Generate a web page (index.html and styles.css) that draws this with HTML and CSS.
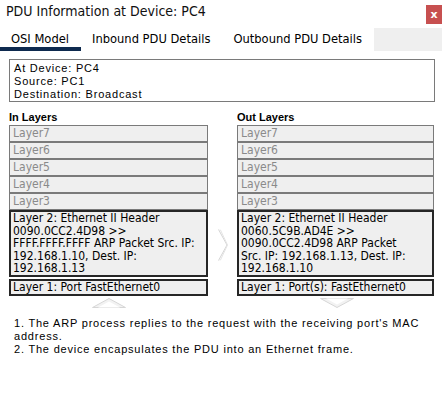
FILE: index.html
```html
<!DOCTYPE html>
<html>
<head>
<meta charset="utf-8">
<link rel="stylesheet" href="styles.css">
</head>
<body>
<div class="window">
  <header class="titlebar">
    <span class="title">PDU Information at Device: PC4</span>
    <span class="close">x</span>
  </header>
  <nav class="tabs">
    <span class="tab active">OSI Model</span>
    <span class="tab">Inbound PDU Details</span>
    <span class="tab">Outbound PDU Details</span>
    <span class="tab-fill"></span>
  </nav>
  <section class="info">
    <div>At Device: PC4</div>
    <div>Source: PC1</div>
    <div>Destination: Broadcast</div>
  </section>
  <div class="layers">
    <div class="col col-in">
      <h3 class="col-title">In Layers</h3>
      <div class="layer dim">Layer7</div>
      <div class="layer dim">Layer6</div>
      <div class="layer dim">Layer5</div>
      <div class="layer dim">Layer4</div>
      <div class="layer dim">Layer3</div>
      <div class="layer active">Layer 2: Ethernet II Header 0090.0CC2.4D98 &gt;&gt; FFFF.FFFF.FFFF ARP Packet Src. IP: 192.168.1.10, Dest. IP: 192.168.1.13</div>
      <div class="layer active l1">Layer 1: Port FastEthernet0</div>
      <div class="vert-arrow">
        <svg width="34" height="10" viewBox="0 0 34 10"><path d="M0.5 9.5 L17 0.5 L33.5 9.5 Z" fill="#f2f2f2" stroke="#d6d6d6"/><path d="M6 9.5 L17 3.5 L28 9.5 Z" fill="#fff" stroke="none"/></svg>
      </div>
    </div>
    <div class="mid">
      <svg class="chev" width="10" height="32" viewBox="0 0 10 32"><path d="M0.5 0.5 L9 16 L0.5 31.5" fill="none" stroke="#d4d4d4" stroke-width="1"/><path d="M1.5 1 L2.5 1 L9.5 16 L2.5 31 L1.5 31" fill="none" stroke="#e4e4e4" stroke-width="1"/></svg>
    </div>
    <div class="col col-out">
      <h3 class="col-title">Out Layers</h3>
      <div class="layer dim">Layer7</div>
      <div class="layer dim">Layer6</div>
      <div class="layer dim">Layer5</div>
      <div class="layer dim">Layer4</div>
      <div class="layer dim">Layer3</div>
      <div class="layer active l2-out">Layer 2: Ethernet II Header 0060.5C9B.AD4E &gt;&gt; 0090.0CC2.4D98 ARP Packet Src. IP: 192.168.1.13, Dest. IP: 192.168.1.10</div>
      <div class="layer active l1">Layer 1: Port(s): FastEthernet0</div>
      <div class="vert-arrow">
        <svg width="34" height="10" viewBox="0 0 34 10"><path d="M0.5 0.5 L17 9.5 L33.5 0.5 Z" fill="#f2f2f2" stroke="#d6d6d6"/><path d="M6 0.5 L17 6.5 L28 0.5 Z" fill="#fff" stroke="none"/></svg>
      </div>
    </div>
  </div>
  <div class="desc">
    <p>1. The ARP process replies to the request with the receiving port's MAC address.</p>
    <p>2. The device encapsulates the PDU into an Ethernet frame.</p>
  </div>
</div>
</body>
</html>
```
FILE: styles.css
```css
html, body {
  margin: 0;
  padding: 0;
  background: #ffffff;
}
.window {
  width: 442px;
  height: 396px;
  font-family: "DejaVu Sans Condensed", "DejaVu Sans", sans-serif;
  color: #000;
}
.titlebar {
  display: flex;
  justify-content: space-between;
  align-items: flex-start;
  height: 28px;
}
.title {
  font-size: 14px;
  line-height: 17px;
  padding: 3px 0 0 6px;
  color: #111;
}
.close {
  margin-top: 5px;
  width: 16px;
  height: 19px;
  background: #c75050;
  color: #fff;
  font-weight: bold;
  font-size: 11px;
  display: flex;
  align-items: center;
  justify-content: center;
  font-family: "DejaVu Sans", sans-serif;
}
.tabs {
  display: flex;
  height: 23px;
  font-size: 12.8px;
}
.tab {
  padding: 3px 12px 0 11px;
  border-bottom: 4px solid transparent;
  box-sizing: border-box;
  height: 23px;
}
.tab.active {
  border-bottom-color: #0e2a4f;
  width: 81px;
}
.tab-fill {
  flex: 1;
  background: #efefef;
  margin-left: 0;
}
.info {
  margin: 8px 7px 0 9px;
  border: 1px solid #7a7a7a;
  padding: 2px 4px 0 4px;
  font-family: "Liberation Sans", Arial, sans-serif;
  font-size: 11px;
  line-height: 13px;
  letter-spacing: 0.8px;
}
.layers {
  display: flex;
  margin: 9px 8px 0 9px;
}
.col {
  display: flex;
  flex-direction: column;
}
.col-in { width: 199px; }
.col-out { width: 197px; }
.mid {
  width: 29px;
  display: flex;
  justify-content: center;
  padding-top: 118px;
  box-sizing: border-box;
}
.col-title {
  margin: 0 0 1px 0;
  font-family: "Liberation Sans", Arial, sans-serif;
  font-weight: bold;
  font-size: 11px;
  line-height: 13px;
}
.layer {
  background: #efefef;
  font-size: 12px;
  line-height: 15px;
  padding: 0 3px;
}
.layer.dim {
  border: 1px solid #7a7a7a;
  color: #8a8a8a;
}
.layer.active {
  border: 2px solid #262626;
  padding: 0 2px;
  line-height: 12.5px;
}
.layer.l2-out {
  padding-right: 13px;
}
.layer.l1 {
  margin-top: 2px;
  line-height: 13px;
}
.vert-arrow {
  display: flex;
  margin-top: 2px;
  padding-left: 83px;
}
.desc {
  margin: 9px 14px 0 14px;
  font-family: "Liberation Sans", Arial, sans-serif;
  font-size: 11px;
  line-height: 13px;
  letter-spacing: 0.8px;
}
.desc p { margin: 0; }
```
